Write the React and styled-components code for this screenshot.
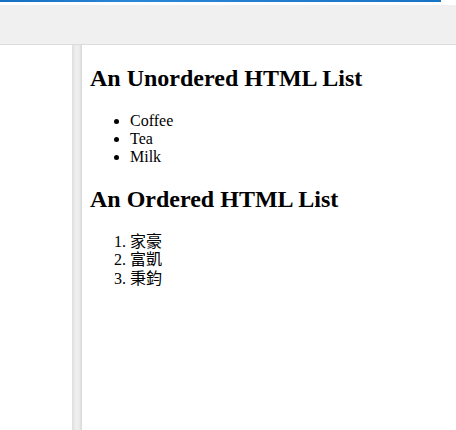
import React from "react";
import styled, { createGlobalStyle } from "styled-components";

const GlobalStyle = createGlobalStyle`
  html, body {
    margin: 0;
    padding: 0;
    background: #ffffff;
  }
`;

const Page = styled.div`
  width: 456px;
  height: 430px;
  display: flex;
  flex-direction: column;
  overflow: hidden;
  background: #ffffff;
`;

const TopLine = styled.div`
  width: 441px;
  height: 2px;
  background: linear-gradient(90deg, #1670c2, #2a86d6 30%, #1a74c6);
`;

const Toolbar = styled.div`
  margin-top: 3px;
  height: 39px;
  background: #f0f0f0;
  border-bottom: 1px solid #dcdcdc;
`;

const Body = styled.div`
  flex: 1;
  display: flex;
`;

const SidePanel = styled.div`
  width: 72px;
  background: #ffffff;
`;

const Divider = styled.div`
  width: 10px;
  background: linear-gradient(90deg, #dedede, #efefef 40%, #ececec 70%, #d8d8d8);
`;

const Content = styled.div`
  flex: 1;
  padding: 0 8px;
  font-family: "Liberation Serif", "Times New Roman", serif;
  color: #000;
`;

const Heading = styled.h2`
  font-size: 24px;
  font-weight: bold;
  margin: 20px 0;
`;

const List = styled.ul`
  font-size: 16px;
  margin: 16px 0;
  padding-left: 40px;
`;

const OrderedList = styled.ol`
  font-size: 16px;
  line-height: 18.4px;
  margin: 16px 0;
  padding-left: 40px;
  font-family: "Liberation Serif", "Noto Sans CJK TC", serif;
`;

export default function App() {
  return (
    <Page>
      <GlobalStyle />
      <TopLine />
      <Toolbar />
      <Body>
        <SidePanel />
        <Divider />
        <Content>
          <Heading>An Unordered HTML List</Heading>
          <List>
            <li>Coffee</li>
            <li>Tea</li>
            <li>Milk</li>
          </List>
          <Heading>An Ordered HTML List</Heading>
          <OrderedList>
            <li>家豪</li>
            <li>富凱</li>
            <li>秉鈞</li>
          </OrderedList>
        </Content>
      </Body>
    </Page>
  );
}
